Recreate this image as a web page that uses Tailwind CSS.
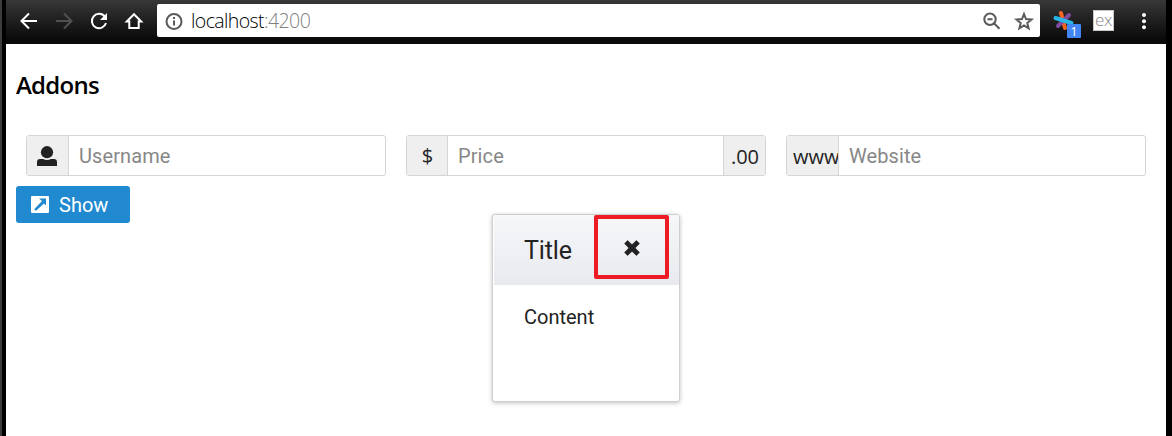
<!DOCTYPE html>
<html lang="en">
<head>
<meta charset="utf-8">
<title>Addons</title>
<script src="https://cdn.jsdelivr.net/npm/@tailwindcss/browser@4"></script>
</head>
<body class="h-[436px] w-[1172px] overflow-hidden bg-black font-['Roboto',sans-serif]">
<div class="flex h-full w-full border-l-2 border-[#3c3c3c] bg-black pl-1 pr-1.5">
<div class="flex w-[1160px] flex-col bg-white">
  <header class="flex h-11 shrink-0 items-start border-b-[6px] border-[#0a0a0a] bg-linear-to-b from-[#383838] to-[#0c0c0c] pt-1">
    <nav class="flex h-[33px] w-[151px] items-center gap-[11px] pl-[11px] text-white">
      <svg class="size-6" viewBox="0 0 24 24" fill="none" stroke="currentColor" stroke-width="2"><path d="M20 12H5M12 4.5 4.5 12l7.5 7.5"/></svg>
      <svg class="size-6 text-[#505050]" viewBox="0 0 24 24" fill="none" stroke="currentColor" stroke-width="2"><path d="M4 12h15M12 4.5l7.5 7.5-7.5 7.5"/></svg>
      <svg class="size-6" viewBox="0 0 24 24" fill="none" stroke="currentColor" stroke-width="2"><path d="M17.8 7.6A7.2 7.2 0 1 0 19 14"/><path d="M20 4v7h-7z" fill="currentColor" stroke="none"/></svg>
      <svg class="size-6" viewBox="0 0 24 24" fill="none" stroke="currentColor" stroke-width="2"><path d="M4.8 12.5 12 5.2l7.2 7.3h-2.5V19H7.3v-6.5z"/></svg>
    </nav>
    <div class="flex h-[33px] w-[883px] items-center rounded-[2px] bg-white pl-[7px] pr-1">
      <svg class="size-5" viewBox="0 0 20 20" fill="none" stroke="#5a5a5a" stroke-width="2"><circle cx="10" cy="10.5" r="7.5"/><path d="M10 9.5v5M10 6v2"/></svg>
      <span class="ml-[7px] whitespace-nowrap font-['Open_Sans',sans-serif] text-[19.5px] font-light leading-[33px] tracking-[-0.6px] text-black">localhost<span class="text-[#808080]">:4200</span></span>
      <svg class="ml-auto size-6" viewBox="0 0 24 24" fill="none" stroke="#5a5a5a" stroke-width="2"><circle cx="10" cy="10.3" r="5.7"/><path d="M7.5 10.3h5M14.2 14.5l5.3 5.3"/></svg>
      <svg class="ml-2 size-6" viewBox="0 0 24 24" fill="none" stroke="#5a5a5a" stroke-width="2"><path d="m12 5 2 5.1 5.5.4-4.2 3.5 1.3 5.3-4.6-2.9-4.6 2.9 1.3-5.3-4.2-3.5 5.5-.4z"/></svg>
    </div>
    <div class="relative ml-[12px] mt-1 h-[27px] w-[30px]">
      <svg class="h-[27px] w-[30px]" viewBox="0 0 30 27" fill="none" stroke-width="4" stroke-linecap="round"><path d="M9 5l4 15" stroke="#f26522"/><path d="M17 7 6 18" stroke="#7d4a9c"/><path d="m3.5 10 16 5" stroke="#29b5e8"/></svg>
      <span class="absolute left-[15px] top-4 h-[14px] w-[14px] rounded-[1px] bg-[#4285f4] text-center font-['Open_Sans',sans-serif] text-[13px] leading-[14px] text-white">1</span>
    </div>
    <span class="ml-[11px] mt-[6px] flex h-[21px] w-[21px] items-center justify-center border border-[#c8c8c8] bg-white font-['Open_Sans',sans-serif] text-[17px] font-light leading-none tracking-[-0.5px] text-[#888]"><span class="-mt-[3px]">ex</span></span>
    <svg class="ml-[24px] mt-[6px] h-[22px] w-[12px]" viewBox="0 0 12 22" fill="#fff"><circle cx="6" cy="5" r="2"/><circle cx="6" cy="11.2" r="2"/><circle cx="6" cy="17.2" r="2"/></svg>
  </header>
  <main class="relative flex grow flex-col items-start pl-[10px]">
    <h1 class="mt-[25px] font-['Open_Sans',sans-serif] text-[24px] font-semibold leading-8 tracking-[-0.75px] text-black">Addons</h1>
    <div class="ml-[10px] mt-[34px] flex gap-5 text-[20px] text-[#878787]">
      <div class="flex h-[41px] w-[360px] overflow-hidden rounded-[3px] border border-[#d5d5d5] bg-white">
        <span class="flex w-[42px] items-center border-r border-[#d5d5d5] bg-[#efefef] pl-[10px]"><svg class="size-5" viewBox="0 0 20 20" fill="#222"><circle cx="10" cy="6.2" r="6.1"/><path d="M0 20v-4q0-3 3-3h3q4 2 8 0h3q3 0 3 3v4z"/></svg></span>
        <span class="pl-[10px] leading-[40px] tracking-[0.1px]">Username</span>
      </div>
      <div class="flex h-[41px] w-[360px] overflow-hidden rounded-[3px] border border-[#d5d5d5] bg-white">
        <span class="flex w-[41px] items-center justify-center border-r border-[#d5d5d5] bg-[#efefef] pl-px font-['Open_Sans',sans-serif] text-[20px] text-[#222]">$</span>
        <span class="grow pl-[10px] leading-[40px] tracking-[0.1px]">Price</span>
        <span class="w-[42px] border-l border-[#d5d5d5] bg-[#efefef] pl-[7px] font-['Open_Sans',sans-serif] text-[20px] leading-[41px] tracking-[-0.1px] text-[#222]">.00</span>
      </div>
      <div class="flex h-[41px] w-[360px] overflow-hidden rounded-[3px] border border-[#d5d5d5] bg-white">
        <span class="w-[52px] shrink-0 overflow-hidden border-r border-[#d5d5d5] bg-[#efefef] pl-[6px] font-['Open_Sans',sans-serif] text-[20px] leading-[41px] text-[#222]">www</span>
        <span class="pl-[10px] leading-[40px] tracking-[0.1px]">Website</span>
      </div>
    </div>
    <button class="mt-[10px] flex h-[37px] w-[114px] items-center rounded-[3px] bg-[#2089cf] pl-[15px] text-[20px] text-white">
      <svg class="h-[17px] w-[18px]" viewBox="0 0 18 17"><rect width="18" height="17" rx="1" fill="#fff"/><path d="M8 2.5h7v7l-2-2-8 7.3-1.8-1.6L11 5z" fill="#2089cf"/></svg>
      <span class="ml-[10px] mt-px leading-[38px]">Show</span>
    </button>
    <section class="absolute left-[486px] top-[170px] h-[188px] w-[188px] rounded-[3px] border border-[#cfcfcf] bg-white pl-px text-[#222] shadow-[0_1px_4px_rgba(0,0,0,0.25)]">
      <div class="flex h-[70px] items-start bg-linear-to-b from-[#f6f7f9] to-[#e9eaef] pl-[31px]">
        <h2 class="-ml-px w-[70px] text-[25px] leading-[71px] tracking-[-0.1px]">Title</h2>
        <button class="flex h-[64px] w-[75px] shrink-0 items-center justify-center rounded-[2px] border-4 border-[#ed1c24]"><svg class="ml-px mt-[2px] size-4" viewBox="0 0 16 16" fill="#222"><path d="m3.6.6 4.4 4.1L12.4.6l3 3L11.1 8l4.3 4.4-3 3L8 11.3l-4.4 4.1-3-3L4.9 8 .6 3.6z" stroke="#222" stroke-width=".7" stroke-linejoin="round"/></svg></button>
      </div>
      <p class="pl-[30px] pt-[17px] text-[20px] leading-[30px]">Content</p>
    </section>
  </main>
</div>
</div>
</body>
</html>
